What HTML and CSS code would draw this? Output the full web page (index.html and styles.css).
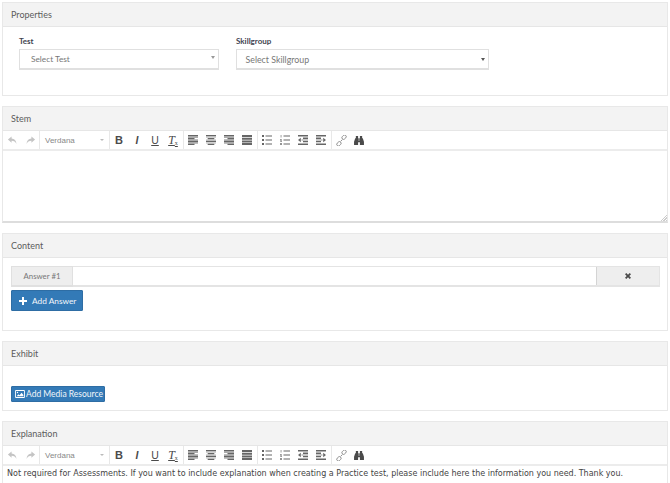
FILE: index.html
```html
<!DOCTYPE html>
<html lang="en">
<head>
<meta charset="utf-8">
<title>Question</title>
<link rel="stylesheet" href="styles.css">
</head>
<body>
<svg class="defs" width="0" height="0" aria-hidden="true">
  <defs>
    <symbol id="undo" viewBox="0 0 12 12"><path d="M5 1.5 1 5l4 3.5V6.300c2.600 0 4.200.9 5.300 3.400C10.200 5.800 8 3.900 5 3.700z"/></symbol>
    <symbol id="redo" viewBox="0 0 12 12"><path d="M7 1.500 11 5 7 8.500V6.300c-2.600 0-4.200.9-5.300 3.400C1.800 5.800 4 3.900 7 3.700z"/></symbol>
    <symbol id="al" viewBox="0 0 10 10"><path d="M0 0h10v1.300H0zM0 2.900h6.500v1.300H0zM0 5.800h10v1.300H0zM0 8.700h6.500V10H0z"/><path opacity=".55" d="M0 1.300h10v1.600H0zM0 4.200h10v1.600H0zM0 7.100h10v1.600H0z"/></symbol>
    <symbol id="ac" viewBox="0 0 10 10"><path d="M0 0h10v1.300H0zM1.700 2.900h6.600v1.300H1.700zM0 5.800h10v1.300H0zM1.700 8.700h6.600V10H1.700z"/><path opacity=".3" d="M0 1.300h10v1.600H0zM0 4.200h10v1.600H0zM0 7.100h10v1.600H0z"/></symbol>
    <symbol id="ar" viewBox="0 0 10 10"><path d="M0 0h10v1.300H0zM3.500 2.900H10v1.300H3.500zM0 5.800h10v1.300H0zM3.500 8.700H10V10H3.500z"/><path opacity=".55" d="M0 1.300h10v1.600H0zM0 4.200h10v1.600H0zM0 7.100h10v1.600H0z"/></symbol>
    <symbol id="aj" viewBox="0 0 10 10"><path d="M0 0h10v2H0zM0 2.700h10v2H0zM0 5.400h10v2H0zM0 8h10v2H0z"/></symbol>
    <symbol id="ul" viewBox="0 0 10 10"><path d="M0 0h2v2H0zM0 4h2v2H0zM0 8h2v2H0zM3.500.4H10v1.200H3.500zM3.500 4.400H10v1.200H3.500zM3.500 8.400H10v1.200H3.500z"/></symbol>
    <symbol id="ol" viewBox="0 0 10 10"><path opacity=".7" d="M.6 0h.9v2.600H.6zM0 4h2v.7H.8v.5H2V7H0v-.7h1.200v-.5H0zM0 8h2v2H0z"/><path d="M3.500.4H10v1.200H3.500zM3.500 4.400H10v1.200H3.500zM3.500 8.400H10v1.200H3.500z"/></symbol>
    <symbol id="out" viewBox="0 0 10 10"><path d="M0 0h10v1.500H0zM0 8.500h10V10H0zM5 2.600h5v1.300H5zM5 6h5v1.300H5zM0 5l2.800-2.200v4.400z"/><path opacity=".5" d="M3.500 4.300H10v1.400H3.500z"/></symbol>
    <symbol id="ind" viewBox="0 0 10 10"><path d="M0 0h10v1.500H0zM0 8.500h10V10H0zM0 2.600h5v1.300H0zM0 6h5v1.300H0zM10 5 7.200 2.800v4.400z"/><path opacity=".5" d="M0 4.300h6.500v1.400H0z"/></symbol>
    <symbol id="link" viewBox="0 0 12 12"><g fill="none" stroke="currentColor" stroke-width="1"><rect x="6.200" y=".6" width="5.200" height="3.600" rx="1.800" transform="rotate(-45 8.800 2.400)"/><rect x=".6" y="7.800" width="5.200" height="3.600" rx="1.800" transform="rotate(-45 3.200 9.600)"/><path d="M5 7l2-2"/></g></symbol>
    <symbol id="bino" viewBox="0 0 11 10"><path d="M2 0h2.500v2.500H2zM6.500 0H9v2.500H6.500zM1.300 2.500h3.900V5.500h.6V2.500h3.900L11 6.500V10H6.500V7H4.500v3H0V6.500z"/></symbol>
    <symbol id="x" viewBox="0 0 8 8"><path d="M1.700 0 4 2.300 6.300 0 8 1.700 5.700 4 8 6.300 6.300 8 4 5.700 1.700 8 0 6.300 2.300 4 0 1.700z"/></symbol>
    <symbol id="plus" viewBox="0 0 8 8"><path d="M3 0h2v3h3v2H5v3H3V5H0V3h3z"/></symbol>
    <symbol id="pic" viewBox="0 0 11 9"><path fill-rule="evenodd" d="M1 0h9a1 1 0 0 1 1 1v7a1 1 0 0 1-1 1H1a1 1 0 0 1-1-1V1a1 1 0 0 1 1-1zm0 1v7h9V1zm.7 5.900L3.600 4.700l1.400 1.300 2.300-3 2 2.500v1.400zM2.700 2a.8.800 0 1 1 0 1.600.8.800 0 0 1 0-1.600z"/></symbol>
  </defs>
</svg>

<main class="page">
  <section class="panel panel-properties">
    <h2 class="panel-heading">Properties</h2>
    <div class="properties-body">
      <div class="field field-test">
        <label class="field-label">Test</label>
        <div class="select select-test"><span>Select Test</span><i class="arrow"></i></div>
      </div>
      <div class="field field-skill">
        <label class="field-label">Skillgroup</label>
        <div class="select select-skill"><span>Select Skillgroup</span><i class="arrow dark"></i></div>
      </div>
    </div>
  </section>

  <section class="panel panel-stem">
    <h2 class="panel-heading">Stem</h2>
    <div class="toolbar">
      <div class="group group-history">
        <span class="tool muted"><svg class="ico12"><use href="#undo"/></svg></span>
        <span class="tool muted"><svg class="ico12"><use href="#redo"/></svg></span>
      </div>
      <div class="group font-picker"><span>Verdana</span><i class="font-caret"></i></div>
      <div class="group">
        <span class="tool glyph bold">B</span>
        <span class="tool glyph italic">I</span>
        <span class="tool glyph under">U</span>
        <span class="tool glyph clear">T<small>x</small></span>
      </div>
      <div class="group">
        <span class="tool"><svg class="ico10"><use href="#al"/></svg></span>
        <span class="tool"><svg class="ico10"><use href="#ac"/></svg></span>
        <span class="tool"><svg class="ico10"><use href="#ar"/></svg></span>
        <span class="tool"><svg class="ico10"><use href="#aj"/></svg></span>
      </div>
      <div class="group">
        <span class="tool"><svg class="ico10"><use href="#ul"/></svg></span>
        <span class="tool"><svg class="ico10"><use href="#ol"/></svg></span>
        <span class="tool"><svg class="ico10"><use href="#out"/></svg></span>
        <span class="tool"><svg class="ico10"><use href="#ind"/></svg></span>
      </div>
      <div class="group last">
        <span class="tool link-tool"><svg class="ico12"><use href="#link"/></svg></span>
        <span class="tool"><svg class="ico11"><use href="#bino"/></svg></span>
      </div>
    </div>
    <div class="editor editor-stem"><i class="resize"></i></div>
  </section>

  <section class="panel panel-content">
    <h2 class="panel-heading">Content</h2>
    <div class="content-body">
      <div class="answer-row">
        <span class="addon">Answer #1</span>
        <span class="answer-input"></span>
        <span class="remove"><svg class="ico-x"><use href="#x"/></svg></span>
      </div>
      <button class="btn btn-answer" type="button"><svg class="ico-plus"><use href="#plus"/></svg>Add Answer</button>
    </div>
  </section>

  <section class="panel panel-exhibit">
    <h2 class="panel-heading">Exhibit</h2>
    <div class="exhibit-body">
      <button class="btn btn-media" type="button"><svg class="ico-pic"><use href="#pic"/></svg>Add Media Resource</button>
    </div>
  </section>

  <section class="panel panel-explanation">
    <h2 class="panel-heading">Explanation</h2>
    <div class="toolbar">
      <div class="group group-history">
        <span class="tool muted"><svg class="ico12"><use href="#undo"/></svg></span>
        <span class="tool muted"><svg class="ico12"><use href="#redo"/></svg></span>
      </div>
      <div class="group font-picker"><span>Verdana</span><i class="font-caret"></i></div>
      <div class="group">
        <span class="tool glyph bold">B</span>
        <span class="tool glyph italic">I</span>
        <span class="tool glyph under">U</span>
        <span class="tool glyph clear">T<small>x</small></span>
      </div>
      <div class="group">
        <span class="tool"><svg class="ico10"><use href="#al"/></svg></span>
        <span class="tool"><svg class="ico10"><use href="#ac"/></svg></span>
        <span class="tool"><svg class="ico10"><use href="#ar"/></svg></span>
        <span class="tool"><svg class="ico10"><use href="#aj"/></svg></span>
      </div>
      <div class="group">
        <span class="tool"><svg class="ico10"><use href="#ul"/></svg></span>
        <span class="tool"><svg class="ico10"><use href="#ol"/></svg></span>
        <span class="tool"><svg class="ico10"><use href="#out"/></svg></span>
        <span class="tool"><svg class="ico10"><use href="#ind"/></svg></span>
      </div>
      <div class="group last">
        <span class="tool link-tool"><svg class="ico12"><use href="#link"/></svg></span>
        <span class="tool"><svg class="ico11"><use href="#bino"/></svg></span>
      </div>
    </div>
    <div class="editor editor-explanation">Not required for Assessments. If you want to include explanation when creating a Practice test, please include here the information you need. Thank you.</div>
  </section>
</main>
</body>
</html>
```
FILE: styles.css
```css
* { box-sizing: border-box; }
html, body { margin: 0; height: 483px; overflow: hidden; background: #fff; }
body { font-family: Lato, "Open Sans", sans-serif; color: #666; font-size: 9px; }
.defs { position: absolute; }
.page { display: flex; flex-direction: column; gap: 10px; padding: 2px 2px 0; width: 670px; }
.panel { width: 666px; border: 1px solid #e8e8e8; background: #fff; flex: none; }
.panel-heading {
  margin: 0; height: 24px; padding: 0 8px;
  background: #f3f3f3; border-bottom: 1px solid #e6e6e6;
  font-size: 9px; font-weight: 400; line-height: 23px; color: #5c5c5c;
}
.panel-properties { height: 94px; }
.panel-stem { height: 117px; border-bottom: 2px solid #ddd; }
.panel-content { height: 98px; }
.panel-exhibit { height: 70px; }
.panel-explanation { height: 80px; }

.properties-body { display: flex; padding: 9px 0 0 16px; gap: 17px; }
.field-test { width: 200px; }
.field-skill { width: 253px; }
.field-label { display: block; height: 13px; font-size: 8px; line-height: 10px; font-weight: 700; color: #3f4450; }
.select {
  position: relative; height: 21px; border: 1px solid #e0e0e0; border-bottom-width: 2px;
  line-height: 19px; color: #777; background: #fff;
}
.select-test { padding-left: 11px; font-size: 8.300px; }
.select-skill { padding-left: 8.500px; font-size: 8.800px; }
.arrow {
  position: absolute; right: 3px; top: 6px; width: 0; height: 0;
  border: 2px solid transparent; border-top: 3px solid #999; border-bottom: 0;
}
.arrow.dark { top: 8px; border-top-color: #555; }

.toolbar { display: flex; height: 20px; border-bottom: 2px solid #ececec; }
.group { display: flex; align-items: center; height: 18px; border-right: 1px solid #e8e8e8; padding-right: 1px; }
.group-history { padding-right: 0; }
.group.last { border-right: 0; }
.tool {
  width: 18px; height: 18px; display: flex; align-items: center; justify-content: center;
  color: #666; fill: #666;
}
.tool.muted { color: #c4c4c4; fill: #c4c4c4; }
.link-tool { color: #888; }
.ico10 { width: 10px; height: 10px; }
.ico11 { width: 10px; height: 9px; fill: #4a4a4a; }
.ico12 { width: 11px; height: 11px; }
.glyph { font-family: "Liberation Sans", sans-serif; font-size: 11px; color: #4a4a4a; }
.bold { font-weight: 700; }
.italic { font-style: italic; font-family: "Liberation Sans", sans-serif; font-weight: 700; font-size: 10.500px; }
.under { text-decoration: underline; font-size: 10.500px; }
.clear { font-family: "Liberation Serif", serif; font-style: italic; font-size: 12px; text-decoration: underline; text-decoration-thickness: 1px; }
.clear small { font-size: 6px; margin-top: 5px; font-style: normal; }
.font-picker {
  position: relative; width: 70px; padding-left: 5px; padding-right: 0;
  font-family: "Liberation Sans", sans-serif; font-size: 8px; color: #888;
}
.font-caret {
  position: absolute; right: 5px; top: 8px; width: 0; height: 0;
  border: 2px solid transparent; border-top: 2px solid #bbb; border-bottom: 0;
}
.editor-stem { position: relative; height: 70px; }
.resize {
  position: absolute; right: 0; bottom: 0; width: 7px; height: 7px;
  background: repeating-linear-gradient(135deg, transparent 0 1px, #ccc 1px 2px);
  clip-path: polygon(100% 0, 100% 100%, 0 100%);
}
.editor-explanation {
  padding: 2px 4px; font-family: "DejaVu Sans", Verdana, sans-serif; font-size: 8px;
  line-height: 12px; color: #444; white-space: nowrap;
}

.content-body { padding: 8px 7px 0 8px; }
.answer-row { display: flex; height: 21px; border: 1px solid #e4e4e4; border-bottom-width: 2px; width: 649px; }
.addon {
  width: 62px; background: #eee; margin: -1px 0 -2px -1px;
  border: 1px solid #e0e0e0; border-bottom-width: 2px;
  text-align: center; font-size: 7.800px; line-height: 19px; color: #777;
}
.answer-input { flex: 1; }
.remove {
  width: 63px; background: #eee; border-left: 1px solid #d4d4d4;
  display: flex; align-items: center; justify-content: center;
}
.ico-x { width: 6px; height: 6px; fill: #4a4a4a; }
.btn {
  display: flex; align-items: center; border: 1px solid #2e6da4; border-radius: 1px;
  background: #337ab7; color: #f2f6fa; font-family: inherit; padding: 0; margin: 0;
}
.btn-answer { margin-top: 3px; width: 72px; height: 21px; font-size: 8.300px; padding-left: 7px; }
.ico-plus { width: 8px; height: 8px; fill: #fff; margin-right: 5px; flex: none; }
.exhibit-body { padding: 20px 8px 0; }
.btn-media { width: 94px; height: 16px; font-size: 8.500px; padding-left: 3px; white-space: nowrap; }
.ico-pic { width: 10px; height: 8px; fill: #fff; margin-right: 1px; flex: none; }
```
